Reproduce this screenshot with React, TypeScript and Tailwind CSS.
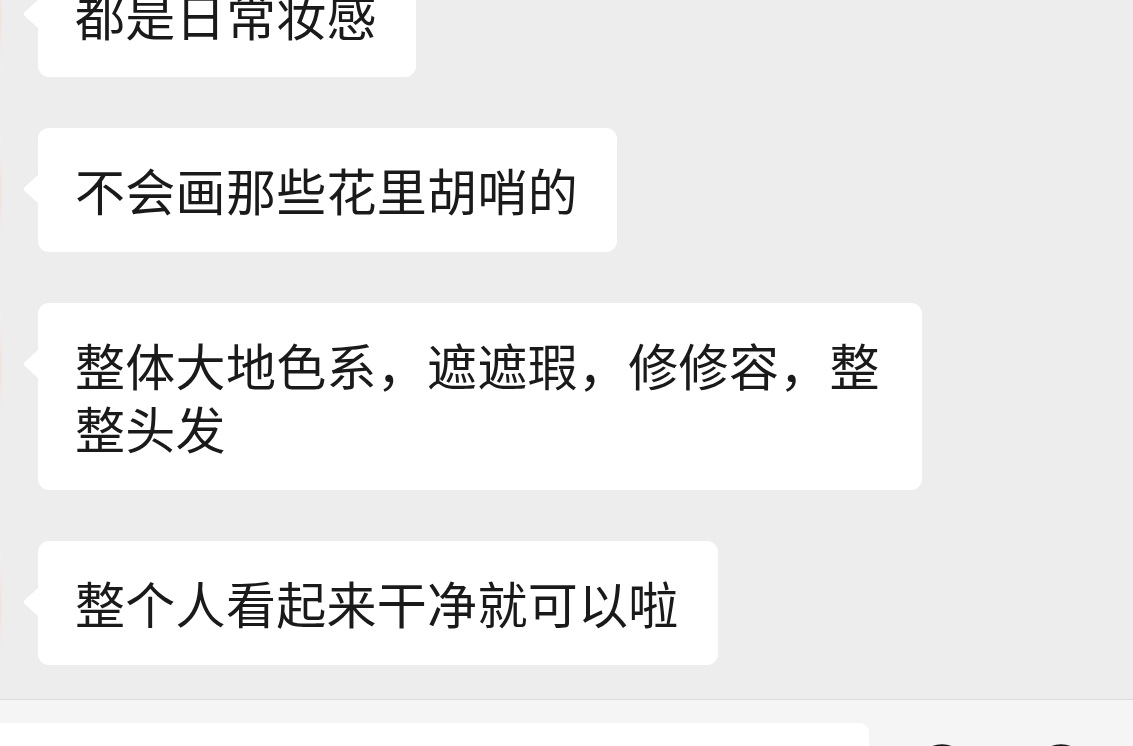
import React from 'react';

const messages = [
  '都是日常妆感',
  '不会画那些花里胡哨的',
  '整体大地色系，遮遮瑕，修修容，整整头发',
  '整个人看起来干净就可以啦',
];

function Bubble({ text }: { text: string }) {
  return (
    <div className="flex items-start">
      {/* avatar, almost fully scrolled off the left edge */}
      <div className="mt-[10px] h-[108px] w-[2px] shrink-0 bg-gradient-to-b from-[#f1efee] via-[#efe4e0] to-[#f0eeed]" />
      <div className="relative ml-[36px] max-w-[884px] rounded-[11px] bg-white pb-[31px] pl-[37px] pr-[39px] pt-[30px] text-[50px] leading-[63px] tracking-[0.3px] text-[#1a1a1a]">
        <svg className="absolute left-[-15px] top-[46px]" width="16" height="30" viewBox="0 0 16 30">
          <path d="M16 0 L1.5 13.2 Q0 15 1.5 16.8 L16 30 Z" fill="#ffffff" />
        </svg>
        {text}
      </div>
    </div>
  );
}

export default function App() {
  return (
    <div
      className="flex h-[746px] w-[1133px] flex-col overflow-hidden bg-[#ededed]"
      style={{ fontFamily: '"Noto Sans CJK SC", "Noto Sans", sans-serif' }}
    >
      <div className="h-[699px] shrink-0 overflow-hidden">
        <div className="mt-[-47px] flex flex-col gap-[51px]">
          {messages.map((m) => (
            <Bubble key={m} text={m} />
          ))}
        </div>
      </div>
      <div className="relative flex-1 border-t border-[#dcdcdc] bg-[#f5f5f5]">
        <div className="mt-[23px] h-[60px] w-[869px] rounded-tr-[9px] bg-white" />
        <svg className="absolute left-[914px] top-[43px]" width="56" height="56" viewBox="0 0 56 56">
          <circle cx="28" cy="28" r="25" fill="none" stroke="#181818" strokeWidth="3.5" />
        </svg>
        <svg className="absolute left-[1033px] top-[43px]" width="56" height="56" viewBox="0 0 56 56">
          <circle cx="28" cy="28" r="25" fill="none" stroke="#181818" strokeWidth="3.5" />
        </svg>
      </div>
    </div>
  );
}
